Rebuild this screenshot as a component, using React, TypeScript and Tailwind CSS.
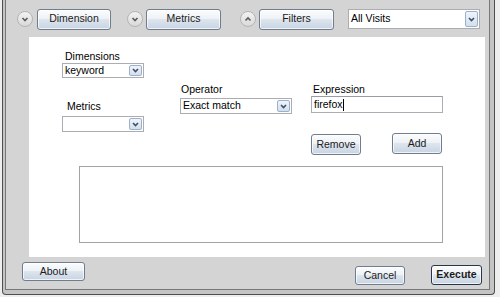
const btn =
  'flex items-center justify-center rounded-[3px] border border-[#707d8e] bg-[linear-gradient(#fbfcfd_0%,#eef2f6_45%,#dde5ee_50%,#c8d4e2_100%)] shadow-[inset_0_0_0_1px_rgba(255,255,255,0.7)] text-[#1b1b1b]';

function Expander({ up = false }: { up?: boolean }) {
  return (
    <div className="w-[16px] h-[16px] rounded-full border border-[#b4b4b4] bg-[linear-gradient(#f3f3f3,#d9d9d9)] flex items-center justify-center">
      <svg width="14" height="14" viewBox="0 0 14 14">
        <path
          d={up ? 'M4.5 8.5 L7 6 L9.5 8.5' : 'M4.5 6 L7 8.5 L9.5 6'}
          fill="none"
          stroke="#5e5e5e"
          strokeWidth="1.7"
        />
      </svg>
    </div>
  );
}

function Drop() {
  return (
    <div className="w-[13px] self-stretch m-[1px] rounded-[2px] border border-[#9cb0c9] bg-[linear-gradient(#eef4fb,#d3dfee)] flex items-center justify-center">
      <svg width="7" height="5" viewBox="0 0 7 5">
        <path d="M1 1 L3.5 3.5 L6 1" fill="none" stroke="#3f4f66" strokeWidth="1.6" />
      </svg>
    </div>
  );
}

function Select({ value, className }: { value: string; className: string }) {
  return (
    <div className={`flex items-stretch border border-[#abadb3] bg-white ${className}`}>
      <div className="flex-1 flex items-center pl-[2px] whitespace-nowrap">{value}</div>
      <Drop />
    </div>
  );
}

export default function App() {
  return (
    <div className="w-[500px] h-[297px] bg-[#eeeeee] font-['Liberation_Sans',Arial,sans-serif] text-[10.5px] text-black overflow-hidden">
      <div className="ml-[2px] w-[493px] h-[295px] flex border-x border-b border-[#4f4f4f] rounded-b-[4px] bg-[#c4c4c4] pl-[2px] pr-[4px] pb-[4px]">
        <div className="flex-1 flex flex-col border-x border-b border-[#777777] bg-[#d4d4d4]">
          {/* toolbar */}
          <div className="flex items-center mt-[8px] h-[22px] pl-[11px]">
            <Expander />
            <button className={`${btn} ml-[4px] w-[74px] h-[21px]`}>Dimension</button>
            <div className="ml-[16px]">
              <Expander />
            </div>
            <button className={`${btn} ml-[3px] w-[75px] h-[21px]`}>Metrics</button>
            <div className="ml-[19px]">
              <Expander up />
            </div>
            <button className={`${btn} ml-[3px] w-[75px] h-[21px]`}>Filters</button>
            <Select value="All Visits" className="ml-[14px] w-[132px] h-[20px]" />
          </div>

          {/* panel */}
          <div className="ml-[23px] mt-[7px] w-[456px] h-[220px] bg-white flex flex-col">
            <div className="flex items-start">
              <div className="ml-[33px] mt-[12px] w-[82px] flex flex-col">
                <div className="pl-[3px] h-[14px] leading-[14px]">Dimensions</div>
                <Select value="keyword" className="h-[15px]" />
                <div className="pl-[5px] mt-[21px] h-[14px] leading-[14px]">Metrics</div>
                <Select value="" className="mt-[3px] h-[16px]" />
              </div>
              <div className="ml-[36px] mt-[45px] w-[112px] flex flex-col">
                <div className="pl-[1px] h-[14px] leading-[14px]">Operator</div>
                <Select value="Exact match" className="mt-[2px] h-[16px]" />
              </div>
              <div className="ml-[19px] mt-[45px] w-[132px] flex flex-col">
                <div className="pl-[2px] h-[14px] leading-[14px]">Expression</div>
                <div className="h-[17px] border border-[#abadb3] border-t-[#9a9ca3] bg-white flex items-center pl-[2px]">
                  firefox
                  <span className="w-px h-[12px] bg-black" />
                </div>
                <div className="mt-[20px] flex items-start">
                  <button className={`${btn} mt-[1px] w-[50px] h-[21px]`}>Remove</button>
                  <button className={`${btn} ml-[31px] w-[50px] h-[21px]`}>Add</button>
                </div>
              </div>
            </div>
            <div className="ml-[50px] mt-[11px] w-[364px] h-[77px] border border-[#a3a3a3] bg-white" />
          </div>

          {/* footer */}
          <div className="flex items-start mt-[5px]">
            <button className={`${btn} ml-[16px] w-[63px] h-[19px]`}>About</button>
            <button className={`${btn} ml-auto mt-[4px] w-[50px] h-[19px]`}>Cancel</button>
            <button
              className={`${btn} ml-[26px] mr-[7px] mt-[3px] w-[51px] h-[20px] border-[#27364a] font-bold`}
            >
              Execute
            </button>
          </div>
        </div>
      </div>
    </div>
  );
}
